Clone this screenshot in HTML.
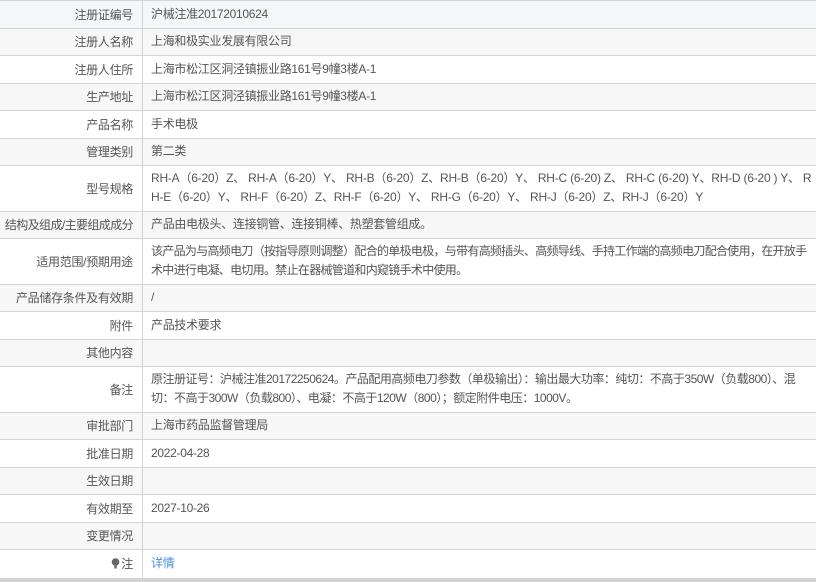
<!DOCTYPE html>
<html><head><meta charset="utf-8"><style>
*{margin:0;padding:0;box-sizing:border-box}
body{width:816px;height:582px;background:#fff;font-family:"Liberation Sans","Noto Sans CJK SC",sans-serif;font-size:12px;color:#555;overflow:hidden;letter-spacing:-0.3px}
.t{border-top:1px solid #d3d3d3;border-bottom:4px solid #d3d3d3;width:816px}
.r{display:flex;border-bottom:1px solid #d3d3d3;height:27.5px}
.r.d{height:45.5px}
.r:nth-child(odd){background:#fff}
.r:nth-child(even){background:#f7f7f7}
.r:first-child{background:#f4f6f9}
.r:last-child{border-bottom:none}
.l{width:143px;flex:none;border-right:1px solid #d3d3d3;text-align:right;padding-right:9px;display:flex;align-items:center;justify-content:flex-end;white-space:nowrap}
.v{padding-left:8px;display:flex;align-items:center;white-space:nowrap;line-height:19px}
.m{letter-spacing:-0.22px}
.u{letter-spacing:-0.7px}
.b{letter-spacing:-0.5px}
a{color:#4a90e2;text-decoration:none}
</style></head><body>
<div class="t">
<div class="r"><div class="l">注册证编号</div><div class="v">沪械注准20172010624</div></div>
<div class="r"><div class="l">注册人名称</div><div class="v">上海和极实业发展有限公司</div></div>
<div class="r"><div class="l">注册人住所</div><div class="v">上海市松江区洞泾镇振业路161号9幢3楼A-1</div></div>
<div class="r"><div class="l">生产地址</div><div class="v">上海市松江区洞泾镇振业路161号9幢3楼A-1</div></div>
<div class="r"><div class="l">产品名称</div><div class="v">手术电极</div></div>
<div class="r"><div class="l">管理类别</div><div class="v">第二类</div></div>
<div class="r d"><div class="l">型号规格</div><div class="v m"><div>RH-A（6-20）Z、 RH-A（6-20）Y、 RH-B（6-20）Z、RH-B（6-20）Y、 RH-C (6-20) Z、 RH-C (6-20) Y、RH-D (6-20 ) Y、 R<br>H-E（6-20）Y、 RH-F（6-20）Z、RH-F（6-20）Y、 RH-G（6-20）Y、 RH-J（6-20）Z、RH-J（6-20）Y</div></div></div>
<div class="r"><div class="l" style="letter-spacing:-0.6px">结构及组成/主要组成成分</div><div class="v">产品由电极头、连接铜管、连接铜棒、热塑套管组成。</div></div>
<div class="r d"><div class="l">适用范围/预期用途</div><div class="v u"><div>该产品为与高频电刀（按指导原则调整）配合的单极电极，与带有高频插头、高频导线、手持工作端的高频电刀配合使用，在开放手<br>术中进行电凝、电切用。禁止在器械管道和内窥镜手术中使用。</div></div></div>
<div class="r"><div class="l">产品储存条件及有效期</div><div class="v">/</div></div>
<div class="r"><div class="l">附件</div><div class="v">产品技术要求</div></div>
<div class="r"><div class="l">其他内容</div><div class="v"></div></div>
<div class="r d"><div class="l">备注</div><div class="v b"><div>原注册证号：沪械注准20172250624。产品配用高频电刀参数（单极输出）：输出最大功率：纯切：不高于350W（负载800）、混<br>切：不高于300W（负载800）、电凝：不高于120W（800）；额定附件电压：1000V。</div></div></div>
<div class="r"><div class="l">审批部门</div><div class="v">上海市药品监督管理局</div></div>
<div class="r"><div class="l">批准日期</div><div class="v">2022-04-28</div></div>
<div class="r"><div class="l">生效日期</div><div class="v"></div></div>
<div class="r"><div class="l">有效期至</div><div class="v">2027-10-26</div></div>
<div class="r"><div class="l">变更情况</div><div class="v"></div></div>
<div class="r"><div class="l"><svg width="9" height="11" viewBox="0 0 9 11" style="margin-right:1px"><circle cx="4.5" cy="4" r="3.8" fill="#666"/><rect x="3.3" y="7" width="2.4" height="3.5" fill="#666"/></svg>注</div><div class="v"><a>详情</a></div></div>
</div>
</body></html>
